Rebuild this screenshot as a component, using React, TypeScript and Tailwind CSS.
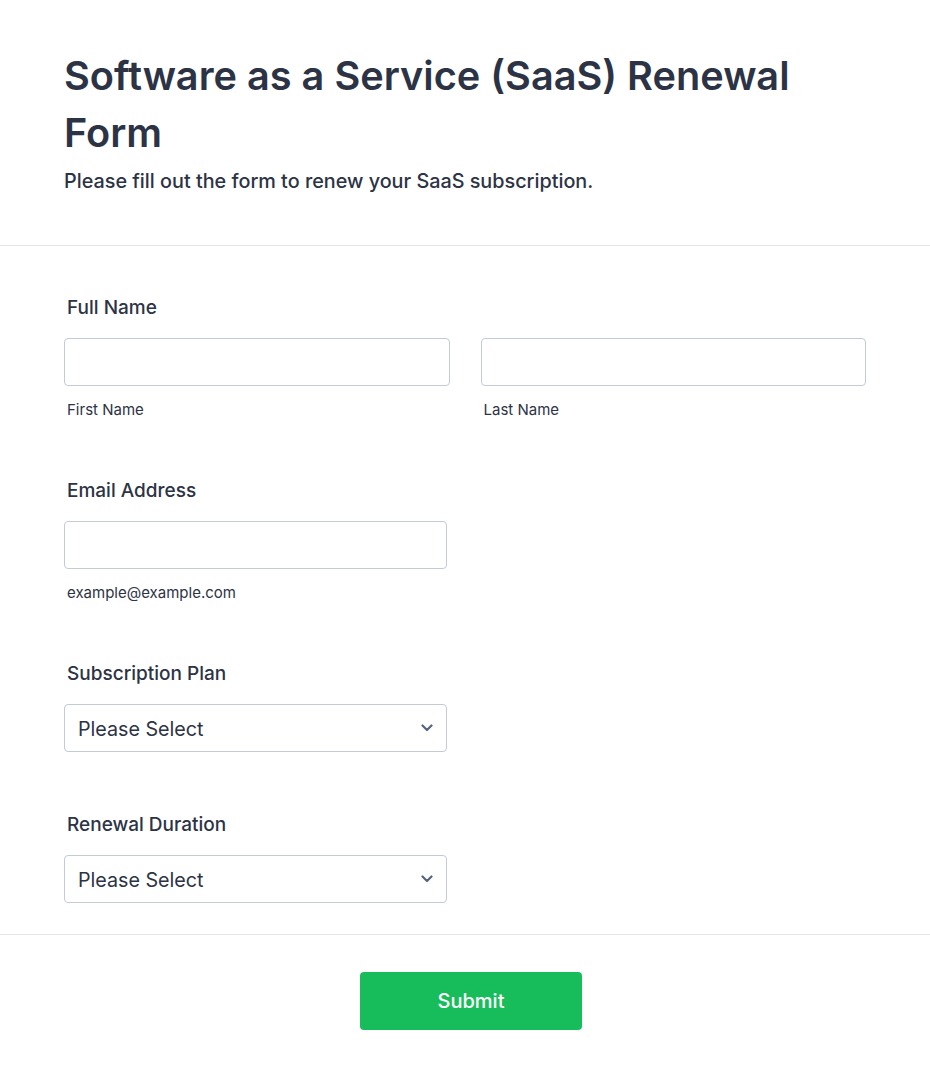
import React from 'react';

const Chevron: React.FC = () => (
  <svg width="12" height="8" viewBox="0 0 12 8" fill="none" className="text-[#57647e]">
    <path d="M1.5 1.5L6 6L10.5 1.5" stroke="currentColor" strokeWidth="2.2" strokeLinecap="round" strokeLinejoin="round" />
  </svg>
);

const Label: React.FC<{ children: React.ReactNode }> = ({ children }) => (
  <label className="block pl-[3px] text-[19px] leading-[28px] font-medium text-[#2c3345]">{children}</label>
);

const Input: React.FC<{ className?: string }> = ({ className = '' }) => (
  <input
    type="text"
    className={`block h-12 rounded border border-[#c3cad8] bg-white px-3 text-[18px] text-[#2c3345] outline-none ${className}`}
  />
);

const Sub: React.FC<{ children: React.ReactNode }> = ({ children }) => (
  <div className="mt-[14px] pl-[3px] text-[15px] leading-[20px] text-[#2c3345]">{children}</div>
);

const Select: React.FC = () => (
  <div className="mt-4 flex h-12 w-[383px] items-center justify-between rounded border border-[#c3cad8] bg-white pl-[13px] pr-[13px]">
    <span className="pt-1 text-[19.7px] text-[#2c3345]">Please Select</span>
    <Chevron />
  </div>
);

const App: React.FC = () => {
  return (
    <div className="min-h-screen bg-white text-[#2c3345]" style={{ fontFamily: 'Inter, "Noto Sans", sans-serif' }}>
      <div className="px-16 pt-12 pb-[50px] border-b border-[#e3e5ea]">
        <h1 className="text-[39.7px] leading-[57px] font-semibold text-[#2c3345]">
          Software as a Service (SaaS) Renewal Form
        </h1>
        <p className="mt-[5px] text-[19.8px] leading-[28px] font-medium">
          Please fill out the form to renew your SaaS subscription.
        </p>
      </div>

      <div className="px-16 pt-12 pb-[31px] border-b border-[#e3e5ea]">
        <div>
          <Label>Full Name</Label>
          <div className="mt-4 grid grid-cols-2 gap-[31px]">
            <div>
              <Input className="w-full" />
              <Sub>First Name</Sub>
            </div>
            <div>
              <Input className="w-full" />
              <Sub>Last Name</Sub>
            </div>
          </div>
        </div>

        <div className="mt-[57px]">
          <Label>Email Address</Label>
          <Input className="mt-4 w-[383px]" />
          <Sub>example@example.com</Sub>
        </div>

        <div className="mt-[57px]">
          <Label>Subscription Plan</Label>
          <Select />
        </div>

        <div className="mt-[59px]">
          <Label>Renewal Duration</Label>
          <Select />
        </div>
      </div>

      <div className="flex justify-center pt-[37px] pb-[51px] pl-3">
        <button className="h-[58px] w-[222px] rounded bg-[#18bd5b] text-[20px] font-medium text-white">
          Submit
        </button>
      </div>
    </div>
  );
};

export default App;
